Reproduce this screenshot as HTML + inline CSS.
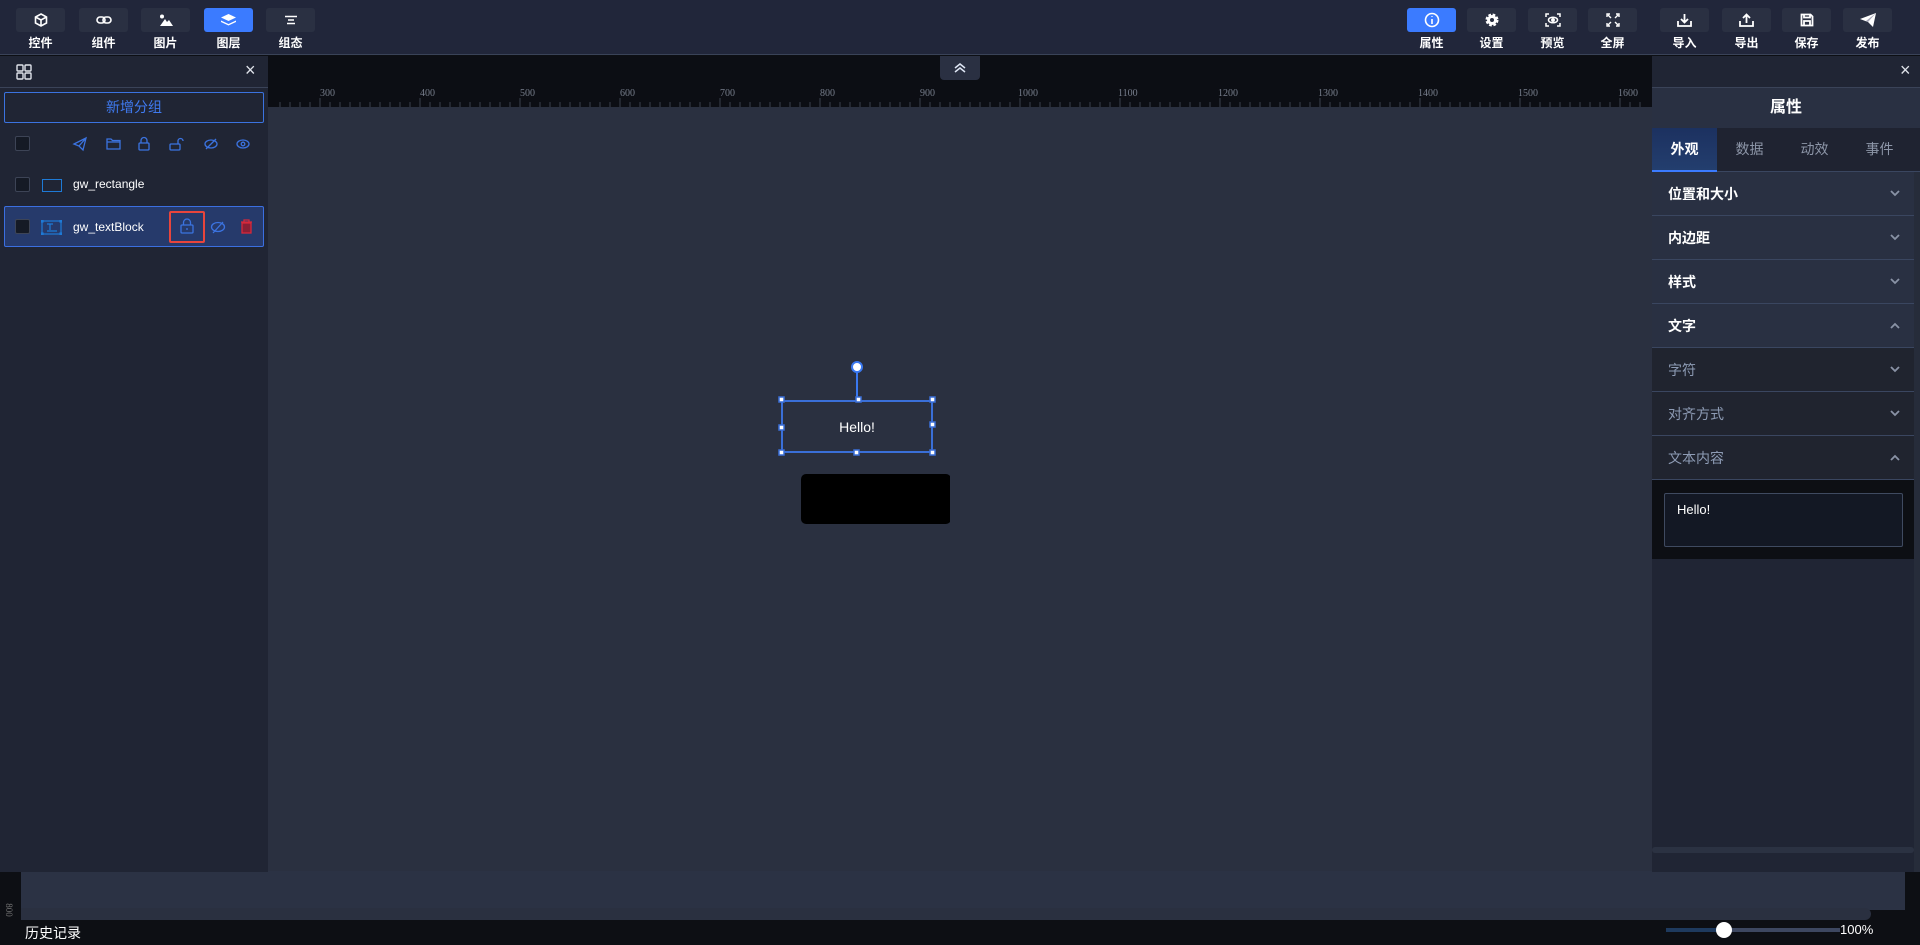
<!DOCTYPE html>
<html><head><meta charset="utf-8"><style>
*{box-sizing:border-box;margin:0;padding:0}
body{width:1920px;height:945px;overflow:hidden;background:#0d0f14;font-family:"Liberation Sans","Noto Sans CJK SC",sans-serif;color:#fff;position:relative}
.abs{position:absolute}
#top{left:0;top:0;width:1920px;height:55px;background:#21263a;border-bottom:1px solid #3a4358}
.tb{position:absolute;top:8px;width:49px;height:24px;background:#2a3042;border-radius:3px;display:flex;align-items:center;justify-content:center}
.tb.on{background:#3b7bff}
.tl{position:absolute;top:34px;width:49px;text-align:center;font-size:12px;font-weight:bold;color:#fff}
#left{left:0;top:56px;width:268px;height:816px;background:#202534}
#right{left:1652px;top:56px;width:268px;height:816px;background:#202534}
.sec{position:absolute;left:0;width:262px;height:44px;border-bottom:1px solid #3a4660;font-size:14px;padding-left:16px;line-height:44px}
.sec.b{background:#293042;font-weight:bold;color:#fff}
.sec.d{background:#20242f;color:#8d9bb4}
.chev{position:absolute;right:14px;top:18px}
.cb{position:absolute;width:15px;height:15px;border:1px solid #3d4456;background:#151a25;border-radius:2px}
</style></head><body>
<div id="top" class="abs">
 <div class="tb" style="left:16px"><svg width="14" height="14" viewBox="0 0 14 14" fill="none" stroke="#fff" stroke-width="1.6"><path d="M7 1L12.5 4v6L7 13 1.5 10V4z M1.5 4L7 7l5.5-3 M7 7v6"/></svg></div><div class="tl" style="left:16px">控件</div>
 <div class="tb" style="left:79px"><svg width="16" height="10" viewBox="0 0 16 10" fill="none" stroke="#fff" stroke-width="1.6"><rect x="1" y="2" width="8" height="6" rx="3"/><rect x="7" y="2" width="8" height="6" rx="3"/></svg></div><div class="tl" style="left:79px">组件</div>
 <div class="tb" style="left:141px"><svg width="14" height="12" viewBox="0 0 14 12" fill="#fff"><circle cx="3" cy="2.5" r="2"/><path d="M1 12L6 5l2 3 2-2 4 6z"/></svg></div><div class="tl" style="left:141px">图片</div>
 <div class="tb on" style="left:204px"><svg width="15" height="13" viewBox="0 0 15 13" fill="#fff"><path d="M7.5 0L15 3.5 7.5 7 0 3.5z"/><path d="M0 6.5l7.5 3.5 7.5-3.5v1.5l-7.5 3.5-7.5-3.5z" /><path d="M0 9.5l7.5 3.5 7.5-3.5v0l-7.5 3.5z"/></svg></div><div class="tl" style="left:204px">图层</div>
 <div class="tb" style="left:266px"><svg width="14" height="10" viewBox="0 0 14 10" stroke="#fff" stroke-width="1.5"><path d="M1 1.5h12M4 5h6M3 8.5h8"/></svg></div><div class="tl" style="left:266px">组态</div>

 <div class="tb on" style="left:1407px"><svg width="16" height="16" viewBox="0 0 16 16" fill="none" stroke="#fff" stroke-width="1.6"><circle cx="8" cy="8" r="6.5"/><path d="M8 7v5M8 4.2v.8"/></svg></div><div class="tl" style="left:1407px">属性</div>
 <div class="tb" style="left:1467px"><svg width="14" height="14" viewBox="0 0 14 14"><circle cx="7" cy="7" r="5" fill="#fff" stroke="#fff" stroke-width="3" stroke-dasharray="2.5 1.5"/><circle cx="7" cy="7" r="2" fill="#2a3042"/></svg></div><div class="tl" style="left:1467px">设置</div>
 <div class="tb" style="left:1528px"><svg width="16" height="14" viewBox="0 0 16 14" fill="none" stroke="#fff" stroke-width="1.5"><path d="M1 4V1h3M12 1h3v3M15 10v3h-3M4 13H1v-3"/><ellipse cx="8" cy="7" rx="4.5" ry="2.8"/><circle cx="8" cy="7" r="1.2" fill="#fff"/></svg></div><div class="tl" style="left:1528px">预览</div>
 <div class="tb" style="left:1588px"><svg width="14" height="14" viewBox="0 0 14 14" fill="none" stroke="#fff" stroke-width="1.4"><path d="M1 4V1h3M10 1h3v3M13 10v3h-3M4 13H1v-3M2 2l3 3M12 2l-3 3M12 12l-3-3M2 12l3-3"/></svg></div><div class="tl" style="left:1588px">全屏</div>
 <div class="tb" style="left:1660px"><svg width="15" height="14" viewBox="0 0 15 14" fill="none" stroke="#fff" stroke-width="1.8"><path d="M7.5 1v8M4 6l3.5 3.5L11 6M1 8v5h13V8"/></svg></div><div class="tl" style="left:1660px">导入</div>
 <div class="tb" style="left:1722px"><svg width="15" height="14" viewBox="0 0 15 14" fill="none" stroke="#fff" stroke-width="1.8"><path d="M7.5 10V2M4 5l3.5-3.5L11 5M1 8v5h13V8"/></svg></div><div class="tl" style="left:1722px">导出</div>
 <div class="tb" style="left:1782px"><svg width="14" height="14" viewBox="0 0 14 14" fill="none" stroke="#fff" stroke-width="1.8"><path d="M1.5 1.5h9l2 2v9h-11z M4 1.5v3h6v-3 M4 12.5V8h6v4.5"/></svg></div><div class="tl" style="left:1782px">保存</div>
 <div class="tb" style="left:1843px"><svg width="16" height="14" viewBox="0 0 16 14" fill="#fff"><path d="M0 6L16 0 13 14 8 9z"/><path d="M8 9L16 0 6 8z" fill="#aab"/></svg></div><div class="tl" style="left:1843px">发布</div>
</div>

<!-- ruler -->
<div class="abs" style="left:268px;top:56px;width:1384px;height:51px;background:#0c0e14"></div>
<svg class="abs" style="left:268px;top:56px" width="1384" height="51">
 <g fill="#777e8c" font-family="Liberation Serif,serif" font-size="10">
  <text x="52" y="40">300</text><text x="152" y="40">400</text><text x="252" y="40">500</text><text x="352" y="40">600</text><text x="452" y="40">700</text><text x="552" y="40">800</text><text x="652" y="40">900</text><text x="750" y="40">1000</text><text x="850" y="40">1100</text><text x="950" y="40">1200</text><text x="1050" y="40">1300</text><text x="1150" y="40">1400</text><text x="1250" y="40">1500</text><text x="1350" y="40">1600</text>
 </g>
 <g stroke="#3a404c" stroke-width="1"><path d="M12 46v5M22 46v5M32 46v5M42 46v5M52 42v9M62 46v5M72 46v5M82 46v5M92 46v5M102 46v5M112 46v5M122 46v5M132 46v5M142 46v5M152 42v9M162 46v5M172 46v5M182 46v5M192 46v5M202 46v5M212 46v5M222 46v5M232 46v5M242 46v5M252 42v9M262 46v5M272 46v5M282 46v5M292 46v5M302 46v5M312 46v5M322 46v5M332 46v5M342 46v5M352 42v9M362 46v5M372 46v5M382 46v5M392 46v5M402 46v5M412 46v5M422 46v5M432 46v5M442 46v5M452 42v9M462 46v5M472 46v5M482 46v5M492 46v5M502 46v5M512 46v5M522 46v5M532 46v5M542 46v5M552 42v9M562 46v5M572 46v5M582 46v5M592 46v5M602 46v5M612 46v5M622 46v5M632 46v5M642 46v5M652 42v9M662 46v5M672 46v5M682 46v5M692 46v5M702 46v5M712 46v5M722 46v5M732 46v5M742 46v5M752 42v9M762 46v5M772 46v5M782 46v5M792 46v5M802 46v5M812 46v5M822 46v5M832 46v5M842 46v5M852 42v9M862 46v5M872 46v5M882 46v5M892 46v5M902 46v5M912 46v5M922 46v5M932 46v5M942 46v5M952 42v9M962 46v5M972 46v5M982 46v5M992 46v5M1002 46v5M1012 46v5M1022 46v5M1032 46v5M1042 46v5M1052 42v9M1062 46v5M1072 46v5M1082 46v5M1092 46v5M1102 46v5M1112 46v5M1122 46v5M1132 46v5M1142 46v5M1152 42v9M1162 46v5M1172 46v5M1182 46v5M1192 46v5M1202 46v5M1212 46v5M1222 46v5M1232 46v5M1242 46v5M1252 42v9M1262 46v5M1272 46v5M1282 46v5M1292 46v5M1302 46v5M1312 46v5M1322 46v5M1332 46v5M1342 46v5M1352 42v9M1362 46v5M1372 46v5"/></g>
</svg>
<div class="abs" style="left:940px;top:56px;width:40px;height:24px;background:#2a3042;border-radius:0 0 4px 4px;display:flex;align-items:center;justify-content:center"><svg width="14" height="10" viewBox="0 0 14 10" fill="none" stroke="#dfe6f5" stroke-width="1.5"><path d="M2 5l5-4 5 4M2 9l5-4 5 4"/></svg></div>
<!-- canvas -->
<div class="abs" style="left:268px;top:107px;width:1384px;height:803px;background:#2a3040"></div>
<div class="abs" style="left:21px;top:871px;width:1884px;height:39px;background:#2b3244"></div>
<div class="abs" style="left:21px;top:908px;width:1850px;height:12px;background:#2a3040;border-radius:0 6px 6px 0"></div>

<svg class="abs" style="left:770px;top:355px" width="180" height="180">
 <line x1="87" y1="12" x2="87" y2="46" stroke="#3a78f0" stroke-width="2"/>
 <circle cx="87" cy="12" r="5" fill="#fff" stroke="#3a78f0" stroke-width="2"/>
 <rect x="12" y="46" width="150" height="51" rx="2" fill="none" stroke="#3a6fd8" stroke-width="2"/>
 <g fill="#fff" stroke="#3a6fd8" stroke-width="1.5"><rect x="9" y="42" width="5" height="5"/><rect x="86" y="42" width="5" height="5"/><rect x="160" y="42" width="5" height="5"/><rect x="9" y="70" width="5" height="5"/><rect x="160" y="67" width="5" height="5"/><rect x="9" y="95" width="5" height="5"/><rect x="84" y="95" width="5" height="5"/><rect x="160" y="95" width="5" height="5"/></g>
 <text x="87" y="77" fill="#fff" font-size="14" text-anchor="middle" font-family="Liberation Sans,sans-serif">Hello!</text>
 <rect x="31" y="119" width="150" height="50" rx="5" fill="#000"/>
</svg>

<!-- left panel -->
<div id="left" class="abs">
 <svg class="abs" style="left:16px;top:8px" width="16" height="16" viewBox="0 0 16 16" fill="none" stroke="#dfe3ea" stroke-width="1.4"><rect x="1" y="1" width="6" height="6" rx="1"/><rect x="9" y="1" width="6" height="6" rx="1"/><rect x="1" y="9" width="6" height="6" rx="1"/><rect x="9" y="9" width="6" height="6" rx="1"/></svg>
 <div class="abs" style="left:245px;top:4px;color:#dfe3ea;font-size:18px">×</div>
 <div class="abs" style="left:0;top:31px;width:268px;height:1px;background:#3a4358"></div>
 <div class="abs" style="left:4px;top:36px;width:260px;height:31px;border:1px solid #3b73e0;border-radius:2px;color:#3f7af0;font-size:14px;text-align:center;line-height:29px">新增分组</div>
 <div class="cb" style="left:15px;top:80px"></div>
 <svg class="abs" style="left:72px;top:80px" width="180" height="16" fill="none" stroke="#3b73e0" stroke-width="1.3">
  <path d="M2 8L14 2 11 14 7 10z M7 10l7-8"/>
  <path d="M35 3h4l1.5 1.5H48V13H35z M35 6h13"/>
  <rect x="67" y="7" width="10" height="7" rx="1"/><path d="M69 7V4.5a3 3 0 0 1 6 0V7"/>
  <rect x="98" y="8" width="10" height="6" rx="1"/><path d="M106 8V5a2.5 2.5 0 0 1 5 0"/>
  <ellipse cx="139" cy="8" rx="6" ry="4"/><path d="M134 13l10-10"/>
  <ellipse cx="171" cy="8" rx="6" ry="4"/><circle cx="171" cy="8" r="1.8"/>
 </svg>
 <div class="cb" style="left:15px;top:121px"></div>
 <div class="abs" style="left:42px;top:123px;width:20px;height:13px;border:1px solid #1e7ad6"></div>
 <div class="abs" style="left:73px;top:121px;font-size:12px;color:#fff">gw_rectangle</div>
 <div class="abs" style="left:4px;top:150px;width:260px;height:41px;background:#263a6b;border:1px solid #3b6fe0;border-radius:2px"></div>
 <div class="cb" style="left:15px;top:163px"></div>
 <svg class="abs" style="left:41px;top:164px" width="21" height="15" fill="none" stroke="#1e7ad6" stroke-width="1.2"><rect x="1" y="1" width="19" height="13"/><path d="M6 4h6M9 4v6M6 11h10"/><g fill="#1e7ad6"><rect x="0" y="0" width="2" height="2"/><rect x="19" y="0" width="2" height="2"/><rect x="0" y="13" width="2" height="2"/><rect x="19" y="13" width="2" height="2"/></g></svg>
 <div class="abs" style="left:73px;top:164px;font-size:12px;color:#fff">gw_textBlock</div>
 <div class="abs" style="left:169px;top:155px;width:36px;height:32px;border:2px solid #e8453c;border-radius:2px"></div>
 <svg class="abs" style="left:180px;top:162px" width="80" height="18" fill="none" stroke="#3b73e0" stroke-width="1.3">
  <rect x="1" y="7" width="12" height="8" rx="1"/><path d="M3.5 7V4.5a3.5 3.5 0 0 1 7 0V7M7 10v2"/>
  <ellipse cx="38" cy="9" rx="6.5" ry="4.5"/><path d="M33 15l10-11"/>
  <g stroke="#d8283a"><path d="M61 4h11M64 4V2h5v2"/><rect x="62" y="5" width="9" height="10" fill="#8b1f35"/></g>
 </svg>
</div>

<!-- right panel -->
<div id="right" class="abs">
 <div class="abs" style="left:248px;top:4px;color:#dfe3ea;font-size:18px">×</div>
 <div class="abs" style="left:0;top:31px;width:268px;height:1px;background:#3a4358"></div>
 <div class="abs" style="left:0;top:32px;width:268px;height:40px;background:#293042;text-align:center;line-height:40px;font-size:16px;font-weight:bold">属性</div>
 <div class="abs" style="left:0;top:72px;width:268px;height:44px;background:#1f2331;border-bottom:1px solid #3a4660;font-size:14px;color:#8d96a8">
  <div class="abs" style="left:0;top:0;width:65px;height:44px;background:linear-gradient(#1c3160,#233e6e);border-bottom:2px solid #3b7bff;color:#fff;font-weight:bold;text-align:center;line-height:42px">外观</div>
  <div class="abs" style="left:65px;width:65px;text-align:center;line-height:42px">数据</div>
  <div class="abs" style="left:130px;width:65px;text-align:center;line-height:42px">动效</div>
  <div class="abs" style="left:195px;width:65px;text-align:center;line-height:42px">事件</div>
 </div>
 <div class="sec b" style="top:116px">位置和大小<svg class="chev" width="10" height="7" fill="none" stroke="#8a93a6" stroke-width="1.8"><path d="M1 1l4 4 4-4"/></svg></div>
 <div class="sec b" style="top:160px">内边距<svg class="chev" width="10" height="7" fill="none" stroke="#8a93a6" stroke-width="1.8"><path d="M1 1l4 4 4-4"/></svg></div>
 <div class="sec b" style="top:204px">样式<svg class="chev" width="10" height="7" fill="none" stroke="#8a93a6" stroke-width="1.8"><path d="M1 1l4 4 4-4"/></svg></div>
 <div class="sec b" style="top:248px">文字<svg class="chev" width="10" height="7" fill="none" stroke="#8a93a6" stroke-width="1.8"><path d="M1 6l4-4 4 4"/></svg></div>
 <div class="sec d" style="top:292px">字符<svg class="chev" width="10" height="7" fill="none" stroke="#8a93a6" stroke-width="1.8"><path d="M1 1l4 4 4-4"/></svg></div>
 <div class="sec d" style="top:336px">对齐方式<svg class="chev" width="10" height="7" fill="none" stroke="#8a93a6" stroke-width="1.8"><path d="M1 1l4 4 4-4"/></svg></div>
 <div class="sec d" style="top:380px">文本内容<svg class="chev" width="10" height="7" fill="none" stroke="#8a93a6" stroke-width="1.8"><path d="M1 6l4-4 4 4"/></svg></div>
 <div class="abs" style="left:0;top:424px;width:262px;height:79px;background:#0d0f14"></div>
 <div class="abs" style="left:12px;top:437px;width:239px;height:54px;background:#131824;border:1px solid #3f4a60;border-radius:2px;font-size:13px;color:#fff;padding:8px 12px">Hello!</div>
 <div class="abs" style="left:262px;top:116px;width:6px;height:700px;background:#262c3a"></div>
 <div class="abs" style="left:0;top:791px;width:262px;height:6px;background:#2b3242;border-radius:3px"></div>
</div>

<!-- bottom bar -->
<div class="abs" style="left:0;top:920px;width:1920px;height:25px;background:#0d0f14"></div>
<div class="abs" style="left:25px;top:923px;font-size:14px;color:#fff">历史记录</div>
<div class="abs" style="left:1666px;top:928px;width:58px;height:4px;background:#1e3a5e"></div>
<div class="abs" style="left:1724px;top:928px;width:116px;height:4px;background:#3d4760"></div>
<div class="abs" style="left:1716px;top:922px;width:16px;height:16px;border-radius:50%;background:#fff"></div>
<div class="abs" style="left:1840px;top:922px;font-size:13px;color:#fff">100%</div>
<div class="abs" style="left:2px;top:905px;font-size:9px;color:#777;transform:rotate(90deg);font-family:'Liberation Serif',serif">800</div>
</body></html>
